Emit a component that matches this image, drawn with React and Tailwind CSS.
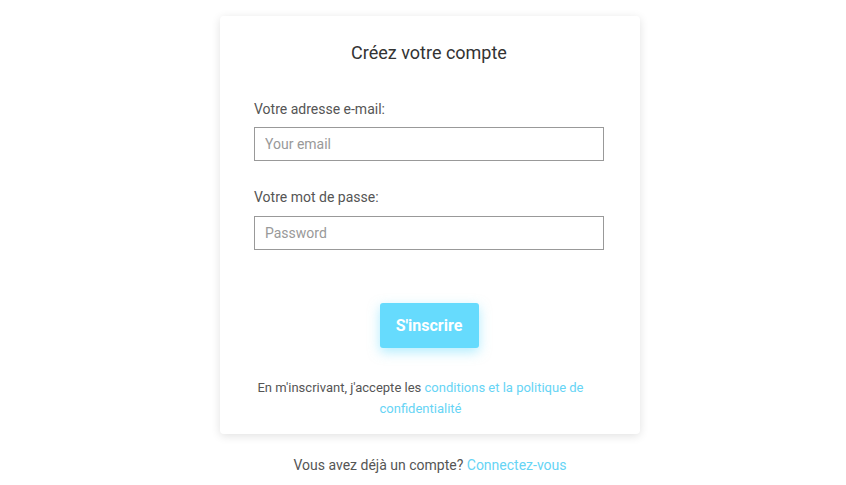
import React, { useState } from 'react';

export default function App() {
  const [email, setEmail] = useState('');
  const [password, setPassword] = useState('');

  return (
    <div className="h-screen overflow-hidden bg-white flex flex-col items-center pt-4 pl-[14px] font-['Roboto',sans-serif]">
      <div className="bg-white w-[420px] rounded shadow-[0_2px_10px_rgba(0,0,0,0.12)] pl-[34px] pr-[36px] pt-[25px] pb-[15px]">
        <h1 className="text-center text-[18px] leading-[24px] text-[#333]">Créez votre compte</h1>

        <label className="block mt-[34px] text-[14px] leading-[20px] text-[#555]">Votre adresse e-mail:</label>
        <input
          className="block w-full h-[34px] mt-[8px] border border-[#999] px-[10px] text-[14px] text-[#555] placeholder:text-[#999] outline-none"
          placeholder="Your email"
          value={email}
          onChange={(e) => setEmail(e.target.value)}
        />

        <label className="block mt-[26px] text-[14px] leading-[20px] text-[#555]">Votre mot de passe:</label>
        <input
          type="password"
          className="block w-full h-[34px] mt-[9px] border border-[#999] px-[10px] text-[14px] text-[#555] placeholder:text-[#999] outline-none"
          placeholder="Password"
          value={password}
          onChange={(e) => setPassword(e.target.value)}
        />

        <div className="flex justify-center mt-[53px]">
          <button className="w-[99px] h-[45px] rounded-[3px] bg-[#66dbfd] text-white font-bold text-[16px] shadow-[0_4px_12px_rgba(102,219,253,0.5)]">
            S'inscrire
          </button>
        </div>

        <p className="mt-[29px] pr-[17px] text-center text-[13px] leading-[21px] text-[#555]">
          En m'inscrivant, j'accepte les{' '}
          <a href="#" className="text-[#66d4f5]">conditions et la politique de confidentialité</a>
        </p>
      </div>

      <p className="mt-[21px] text-[14px] leading-[20px] text-[#555]">
        Vous avez déjà un compte? <a href="#" className="text-[#66d4f5]">Connectez-vous</a>
      </p>
    </div>
  );
}
